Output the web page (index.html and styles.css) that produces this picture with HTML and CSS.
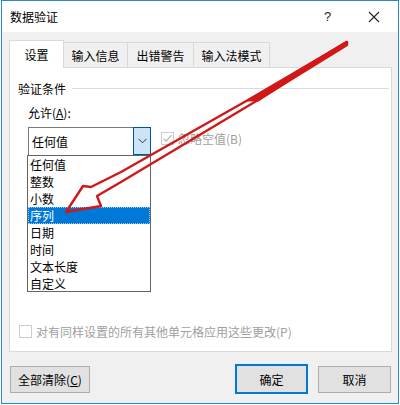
FILE: index.html
```html
<!DOCTYPE html>
<html lang="zh">
<head>
<meta charset="utf-8">
<link rel="stylesheet" href="styles.css">
</head>
<body>
<div class="window">
  <div class="titlebar">
    <span class="title">数据验证</span>
    <span class="help">?</span>
    <span class="close">
      <svg width="12" height="12" viewBox="0 0 12 12"><path d="M1 1L11 11M11 1L1 11" stroke="#222" stroke-width="1.1" fill="none"/></svg>
    </span>
  </div>
  <div class="content">
    <div class="tabs">
      <div class="tab active">设置</div>
      <div class="tab">输入信息</div>
      <div class="tab">出错警告</div>
      <div class="tab">输入法模式</div>
    </div>
    <div class="panel">
      <div class="group-head"><span>验证条件</span><span class="rule"></span></div>
      <div class="allow-label">允许(<u>A</u>):</div>
      <div class="combo-row">
        <div class="combo-col">
          <div class="combo">
            <span class="combo-value">任何值</span>
            <span class="combo-btn">
              <svg width="9" height="6" viewBox="0 0 9 6"><path d="M0.5 0.8L4.5 4.8L8.5 0.8" stroke="#333" stroke-width="1" fill="none"/></svg>
            </span>
          </div>
          <ul class="list">
            <li>任何值</li>
            <li>整数</li>
            <li>小数</li>
            <li class="sel">序列</li>
            <li>日期</li>
            <li>时间</li>
            <li>文本长度</li>
            <li>自定义</li>
          </ul>
        </div>
        <label class="check disabled ignore">
          <span class="box checked">
            <svg width="11" height="11" viewBox="0 0 11 11"><path d="M1.5 5.5L4.2 8.2L9.5 2.2" stroke="#b4b4b4" stroke-width="1.2" fill="none"/></svg>
          </span>
          <span>忽略空值(B)</span>
        </label>
      </div>
      <label class="check disabled apply">
        <span class="box"></span>
        <span>对有同样设置的所有其他单元格应用这些更改(P)</span>
      </label>
    </div>
    <div class="footer">
      <button class="btn clear">全部清除(<u>C</u>)</button>
      <span class="spacer"></span>
      <button class="btn ok">确定</button>
      <button class="btn cancel">取消</button>
    </div>
  </div>
  <svg class="arrow" width="400" height="405" viewBox="0 0 400 405">
    <path d="M346 42 L247 100 L120 172 L90 187 L82 186 L65 212 L100 206 L96 196 L120 182 L257 100 L346 45 Z" fill="none" stroke="#d01818" stroke-width="2.4" stroke-linejoin="round"/>
    <path d="M346 42 L250 100 L257 100 Z" fill="#d01818" stroke="#d01818" stroke-width="3"/>
  </svg>
</div>
</body>
</html>
```

FILE: styles.css
```css
* { box-sizing: border-box; }
html, body { margin: 0; padding: 0; }
body {
  width: 400px;
  height: 405px;
  background: #ffffff;
  font-family: "Noto Sans CJK SC", "Noto Sans", sans-serif;
  font-size: 12px;
  color: #000;
  overflow: hidden;
}
.window {
  position: relative;
  width: 398px;
  height: 404px;
  margin-left: 1px;
  border: 1px solid #2b87c9;
  background: #f0f0f0;
  display: flex;
  flex-direction: column;
}
.titlebar {
  height: 31px;
  background: #ffffff;
  display: flex;
  align-items: center;
  padding-left: 8px;
}
.title { flex: 1; font-size: 12px; color: #000; }
.help { width: 12px; font-family: "Liberation Sans", sans-serif; font-size: 13px; margin-right: 32px; color: #222; }
.close { width: 14px; margin-right: 16px; display: flex; align-items: center; }
.content {
  flex: 1;
  padding: 8px 7px 0 7px;
  display: flex;
  flex-direction: column;
}
.tabs {
  display: flex;
  align-items: flex-end;
  height: 27px;
  position: relative;
  z-index: 1;
}
.tab {
  height: 25px;
  padding: 0 8px;
  border: 1px solid #d9d9d9;
  border-bottom: none;
  border-left: none;
  background: #f0f0f0;
  display: flex;
  align-items: center;
  color: #000;
}
.tab.active {
  height: 28px;
  margin-bottom: -1px;
  background: #fff;
  border-left: 1px solid #d9d9d9;
  width: 55px;
  justify-content: center;
  padding: 0;
}
.tab:nth-child(2) { width: 64px; justify-content: center; padding: 0; }
.tab:nth-child(3) { width: 66px; justify-content: center; padding: 0; }
.tab:nth-child(4) { width: 76px; justify-content: center; padding: 0; }
.panel {
  height: 285px;
  width: 383px;
  background: #fff;
  border: 1px solid #d9d9d9;
  padding: 12px 0 0 8px;
  display: flex;
  flex-direction: column;
}
.group-head {
  display: flex;
  align-items: center;
  height: 16px;
  color: #000;
}
.group-head .rule {
  flex: 1;
  height: 1px;
  background: #dcdcdc;
  margin-left: 6px;
  margin-right: 2px;
}
.allow-label {
  margin: 9px 0 0 10px;
  height: 16px;
  line-height: 16px;
}
.combo-row {
  display: flex;
  align-items: flex-start;
  margin-top: 6px;
  margin-left: 9px;
}
.combo-col { width: 124px; display: flex; flex-direction: column; }
.combo {
  height: 28px;
  margin-left: 1px;
  border: 1px solid #7a7a7a;
  border-bottom: none;
  display: flex;
  align-items: stretch;
  background: #fff;
}
.combo-value { flex: 1; display: flex; align-items: center; padding-left: 3px; font-size: 12px; }
.combo-btn {
  width: 18px;
  margin: -1px -1px 0 0;
  background: #cce4f7;
  border: 1px solid #005499;
  display: flex;
  align-items: center;
  justify-content: center;
}
.list {
  list-style: none;
  margin: 0;
  padding: 0;
  border: 1px solid #646464;
  background: #fff;
  height: 137px;
}
.list li {
  height: 17px;
  line-height: 17px;
  padding-left: 2px;
}
.list li.sel {
  background: #0078d7;
  color: #fff;
  outline: 1px dotted #99c9ef;
  outline-offset: -1px;
}
.check {
  display: flex;
  align-items: center;
  gap: 4px;
}
.check.disabled { color: #a0a0a0; }
.box {
  width: 13px;
  height: 13px;
  border: 1px solid #cccccc;
  background: #fff;
  display: flex;
  align-items: center;
  justify-content: center;
}
.ignore { margin-left: 10px; margin-top: 3px; }
.apply { margin-top: 31px; margin-left: 1px; color: #8a8a8a; }
.footer {
  display: flex;
  align-items: center;
  margin-top: 12px;
  height: 30px;
}
.spacer { flex: 1; }
.btn {
  font-family: "Noto Sans CJK SC", "Noto Sans", sans-serif;
  font-size: 12px;
  color: #000;
  background: #e1e1e1;
  border: 1px solid #adadad;
  height: 27px;
  padding: 0;
}
.clear { width: 80px; margin-left: 1px; }
.ok { width: 73px; height: 30px; border: 2px solid #0078d7; margin-right: 10px; }
.cancel { width: 73px; }
.arrow {
  position: absolute;
  left: -1px;
  top: -1px;
  pointer-events: none;
}
```
